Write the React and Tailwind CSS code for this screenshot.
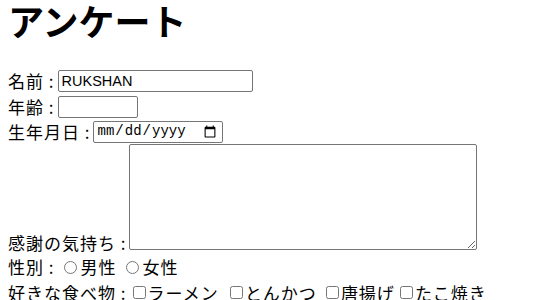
import React from 'react'

const field = "border border-[#767676] rounded-[2px] bg-white h-[22px] px-[3px] text-black tracking-normal"

const foods = [
  { name: 'ラーメン', gap: 'ml-[6px]' },
  { name: 'とんかつ', gap: 'ml-[11px]' },
  { name: '唐揚げ', gap: 'ml-[9px]' },
  { name: 'たこ焼き', gap: 'ml-[5px]' },
]

const App = () => {
  return (
    <div className="px-2 text-[17px] tracking-[1px] text-black bg-white font-['Noto_Sans_CJK_JP','Noto_Sans',sans-serif]">
      <h1 className="text-[36px] tracking-normal font-bold leading-[40px] mb-[28px]">アンケート</h1>

      <form>
        <div className="flex items-center h-[26px]">
          <span>名前 :</span>
          <input type="text" defaultValue="RUKSHAN" className={`${field} ml-[3px] w-[195px] text-[14.5px] font-['Liberation_Sans',Arial,sans-serif]`} />
        </div>
        <div className="flex items-center h-[25px]">
          <span>年齢 :</span>
          <input type="text" className={`${field} ml-[3px] w-[80px]`} />
        </div>
        <div className="flex items-center h-[25px]">
          <span>生年月日 :</span>
          <input type="date" className={`${field} ml-[2px] w-[130px] text-[14px] font-['Liberation_Mono',monospace]`} />
        </div>
        <div className="flex items-end h-[110px] pb-[4px]">
          <span className="leading-[20px] mb-[-3px]">感謝の気持ち :</span>
          <textarea className="ml-[2px] w-[348px] h-[106px] border border-[#767676] rounded-[2px] bg-white" />
        </div>
        <div className="flex items-center h-[26px]">
          <span>性別 :</span>
          <label className="flex items-center ml-[9px]">
            <input type="radio" name="sex" className="mr-[4px] w-[13px] h-[13px]" />
            男性
          </label>
          <label className="flex items-center ml-[9px]">
            <input type="radio" name="sex" className="mr-[4px] w-[13px] h-[13px]" />
            女性
          </label>
        </div>
        <div className="flex items-center h-[25px]">
          <span>好きな食べ物 :</span>
          {foods.map((food) => (
            <label key={food.name} className={`flex items-center ${food.gap}`}>
              <input type="checkbox" className="mr-[2px] w-[13px] h-[13px]" />
              {food.name}
            </label>
          ))}
        </div>
      </form>
    </div>
  )
}

export default App
